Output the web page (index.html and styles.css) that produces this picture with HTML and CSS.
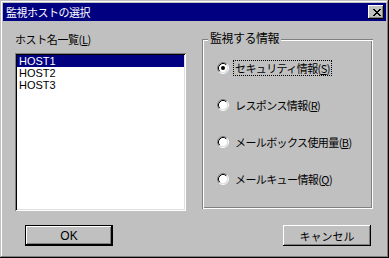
FILE: index.html
```html
<!DOCTYPE html>
<html lang="ja">
<head>
<meta charset="utf-8">
<title>監視ホストの選択</title>
<link rel="stylesheet" href="styles.css">
</head>
<body>
<div class="window">
  <div class="titlebar">
    <span class="title">監視ホストの選択</span>
    <span class="close"><svg width="8" height="7" viewBox="0 0 8 7"><path d="M0 0h2v1h1v1h2v-1h1v-1h2v1h-1v1h-1v1h-1v1h1v1h1v1h1v1h-2v-1h-1v-1h-2v1h-1v1h-2v-1h1v-1h1v-1h1v-1h-1v-1h-1v-1h-1z" fill="#000"/></svg></span>
  </div>
  <div class="client">
    <div class="columns">
      <div class="left">
        <div class="label">ホスト名一覧(<u>L</u>)</div>
        <div class="listbox">
          <div class="item selected">HOST1</div>
          <div class="item">HOST2</div>
          <div class="item">HOST3</div>
        </div>
      </div>
      <fieldset class="group">
        <legend class="legend">監視する情報</legend>
        <div class="option">
          <svg class="radio" width="12" height="12" viewBox="0 0 12 12"><circle cx="6" cy="6" r="4.5" fill="#fff"/><path d="M2.11 9.89A5.5 5.5 0 0 1 9.89 2.11" stroke="#808080" fill="none"/><path d="M9.89 2.11A5.5 5.5 0 0 1 2.11 9.89" stroke="#fff" fill="none"/><path d="M2.82 9.18A4.5 4.5 0 0 1 9.18 2.82" stroke="#000" fill="none"/><path d="M9.18 2.82A4.5 4.5 0 0 1 2.82 9.18" stroke="#dfdfdf" fill="none"/><circle cx="6" cy="6" r="2" fill="#000"/></svg>
          <span class="otext focus">セキュリティ情報(<u>S</u>)</span>
        </div>
        <div class="option">
          <svg class="radio" width="12" height="12" viewBox="0 0 12 12"><circle cx="6" cy="6" r="4.5" fill="#fff"/><path d="M2.11 9.89A5.5 5.5 0 0 1 9.89 2.11" stroke="#808080" fill="none"/><path d="M9.89 2.11A5.5 5.5 0 0 1 2.11 9.89" stroke="#fff" fill="none"/><path d="M2.82 9.18A4.5 4.5 0 0 1 9.18 2.82" stroke="#000" fill="none"/><path d="M9.18 2.82A4.5 4.5 0 0 1 2.82 9.18" stroke="#dfdfdf" fill="none"/></svg>
          <span class="otext">レスポンス情報(<u>R</u>)</span>
        </div>
        <div class="option">
          <svg class="radio" width="12" height="12" viewBox="0 0 12 12"><circle cx="6" cy="6" r="4.5" fill="#fff"/><path d="M2.11 9.89A5.5 5.5 0 0 1 9.89 2.11" stroke="#808080" fill="none"/><path d="M9.89 2.11A5.5 5.5 0 0 1 2.11 9.89" stroke="#fff" fill="none"/><path d="M2.82 9.18A4.5 4.5 0 0 1 9.18 2.82" stroke="#000" fill="none"/><path d="M9.18 2.82A4.5 4.5 0 0 1 2.82 9.18" stroke="#dfdfdf" fill="none"/></svg>
          <span class="otext">メールボックス使用量(<u>B</u>)</span>
        </div>
        <div class="option">
          <svg class="radio" width="12" height="12" viewBox="0 0 12 12"><circle cx="6" cy="6" r="4.5" fill="#fff"/><path d="M2.11 9.89A5.5 5.5 0 0 1 9.89 2.11" stroke="#808080" fill="none"/><path d="M9.89 2.11A5.5 5.5 0 0 1 2.11 9.89" stroke="#fff" fill="none"/><path d="M2.82 9.18A4.5 4.5 0 0 1 9.18 2.82" stroke="#000" fill="none"/><path d="M9.18 2.82A4.5 4.5 0 0 1 2.82 9.18" stroke="#dfdfdf" fill="none"/></svg>
          <span class="otext">メールキュー情報(<u>Q</u>)</span>
        </div>
      </fieldset>
    </div>
    <div class="buttons">
      <button class="btn default">OK</button>
      <button class="btn">キャンセル</button>
    </div>
  </div>
</div>
</body>
</html>
```
FILE: styles.css
```css
html, body {
  margin: 0;
  padding: 0;
  background: #c0c0c0;
}
body {
  font-family: "Noto Sans CJK JP", "Liberation Sans", sans-serif;
  font-size: 11px;
  color: #000;
}
.window {
  width: 389px;
  height: 258px;
  box-sizing: border-box;
  padding: 3px;
  background: #c0c0c0;
  box-shadow: inset -1px -1px 0 #000, inset 1px 1px 0 #c0c0c0, inset -2px -2px 0 #808080, inset 2px 2px 0 #fff;
  display: flex;
  flex-direction: column;
}
.titlebar {
  height: 18px;
  background: #000080;
  color: #fff;
  display: flex;
  align-items: center;
  justify-content: space-between;
  padding: 0 2px 0 3px;
}
.title {
  font-size: 11px;
  letter-spacing: -0.5px;
  line-height: 14px;
}
.close {
  width: 16px;
  height: 14px;
  box-sizing: border-box;
  background: #c0c0c0;
  box-shadow: inset -1px -1px 0 #000, inset 1px 1px 0 #fff, inset -2px -2px 0 #808080;
  display: flex;
  align-items: center;
  justify-content: center;
  padding-left: 1px;
}
.close svg { display: block; }
.client {
  flex: 1;
  padding: 11px 13px 0 12px;
  display: flex;
  flex-direction: column;
}
.columns {
  display: flex;
  justify-content: space-between;
}
.left {
  width: 171px;
  display: flex;
  flex-direction: column;
}
.label {
  height: 14px;
  line-height: 14px;
  margin-bottom: 7px;
  letter-spacing: -0.4px;
}
.listbox {
  height: 158px;
  box-sizing: border-box;
  background: #fff;
  padding: 2px;
  box-shadow: inset 1px 1px 0 #808080, inset -1px -1px 0 #fff, inset 2px 2px 0 #000, inset -2px -2px 0 #dfdfdf;
  font-family: "Liberation Sans", sans-serif;
  font-size: 11px;
}
.item {
  height: 12px;
  line-height: 12px;
  padding-left: 2px;
}
.item.selected {
  background: #000080;
  color: #fff;
}
.group {
  margin: 7px 0 0 0;
  width: 171px;
  height: 170px;
  box-sizing: border-box;
  border: none;
  padding: 21px 0 0 15px;
  box-shadow: inset 1px 1px 0 #808080, inset 2px 2px 0 #fff, inset -1px -1px 0 #fff, inset -2px -2px 0 #808080;
  position: relative;
}
.legend {
  position: absolute;
  top: -8px;
  left: 6px;
  padding: 0 2px;
  background: #c0c0c0;
  font-size: 12px;
  line-height: 14px;
  letter-spacing: -0.5px;
}
.option {
  display: flex;
  align-items: center;
  height: 16px;
  margin-bottom: 21px;
}
.radio {
  display: block;
  flex: none;
  margin-right: 5px;
}
.otext {
  line-height: 14px;
  padding: 0 1px;
  letter-spacing: -0.6px;
}
.otext.focus {
  outline: 1px dotted #000;
}
.buttons {
  display: flex;
  justify-content: space-between;
  margin-top: 14px;
  padding: 0 2px 0 10px;
}
.btn {
  width: 88px;
  height: 21px;
  box-sizing: border-box;
  border: none;
  background: #c0c0c0;
  font-family: "Noto Sans CJK JP", "Liberation Sans", sans-serif;
  font-size: 11px;
  color: #000;
  padding: 0;
  box-shadow: inset -1px -1px 0 #000, inset 1px 1px 0 #fff, inset -2px -2px 0 #808080;
}
.btn.default {
  box-shadow: inset 0 0 0 1px #000, inset -2px -2px 0 #000, inset 2px 2px 0 #fff, inset -3px -3px 0 #808080;
  font-family: "Liberation Sans", sans-serif;
  font-size: 12px;
}
```
